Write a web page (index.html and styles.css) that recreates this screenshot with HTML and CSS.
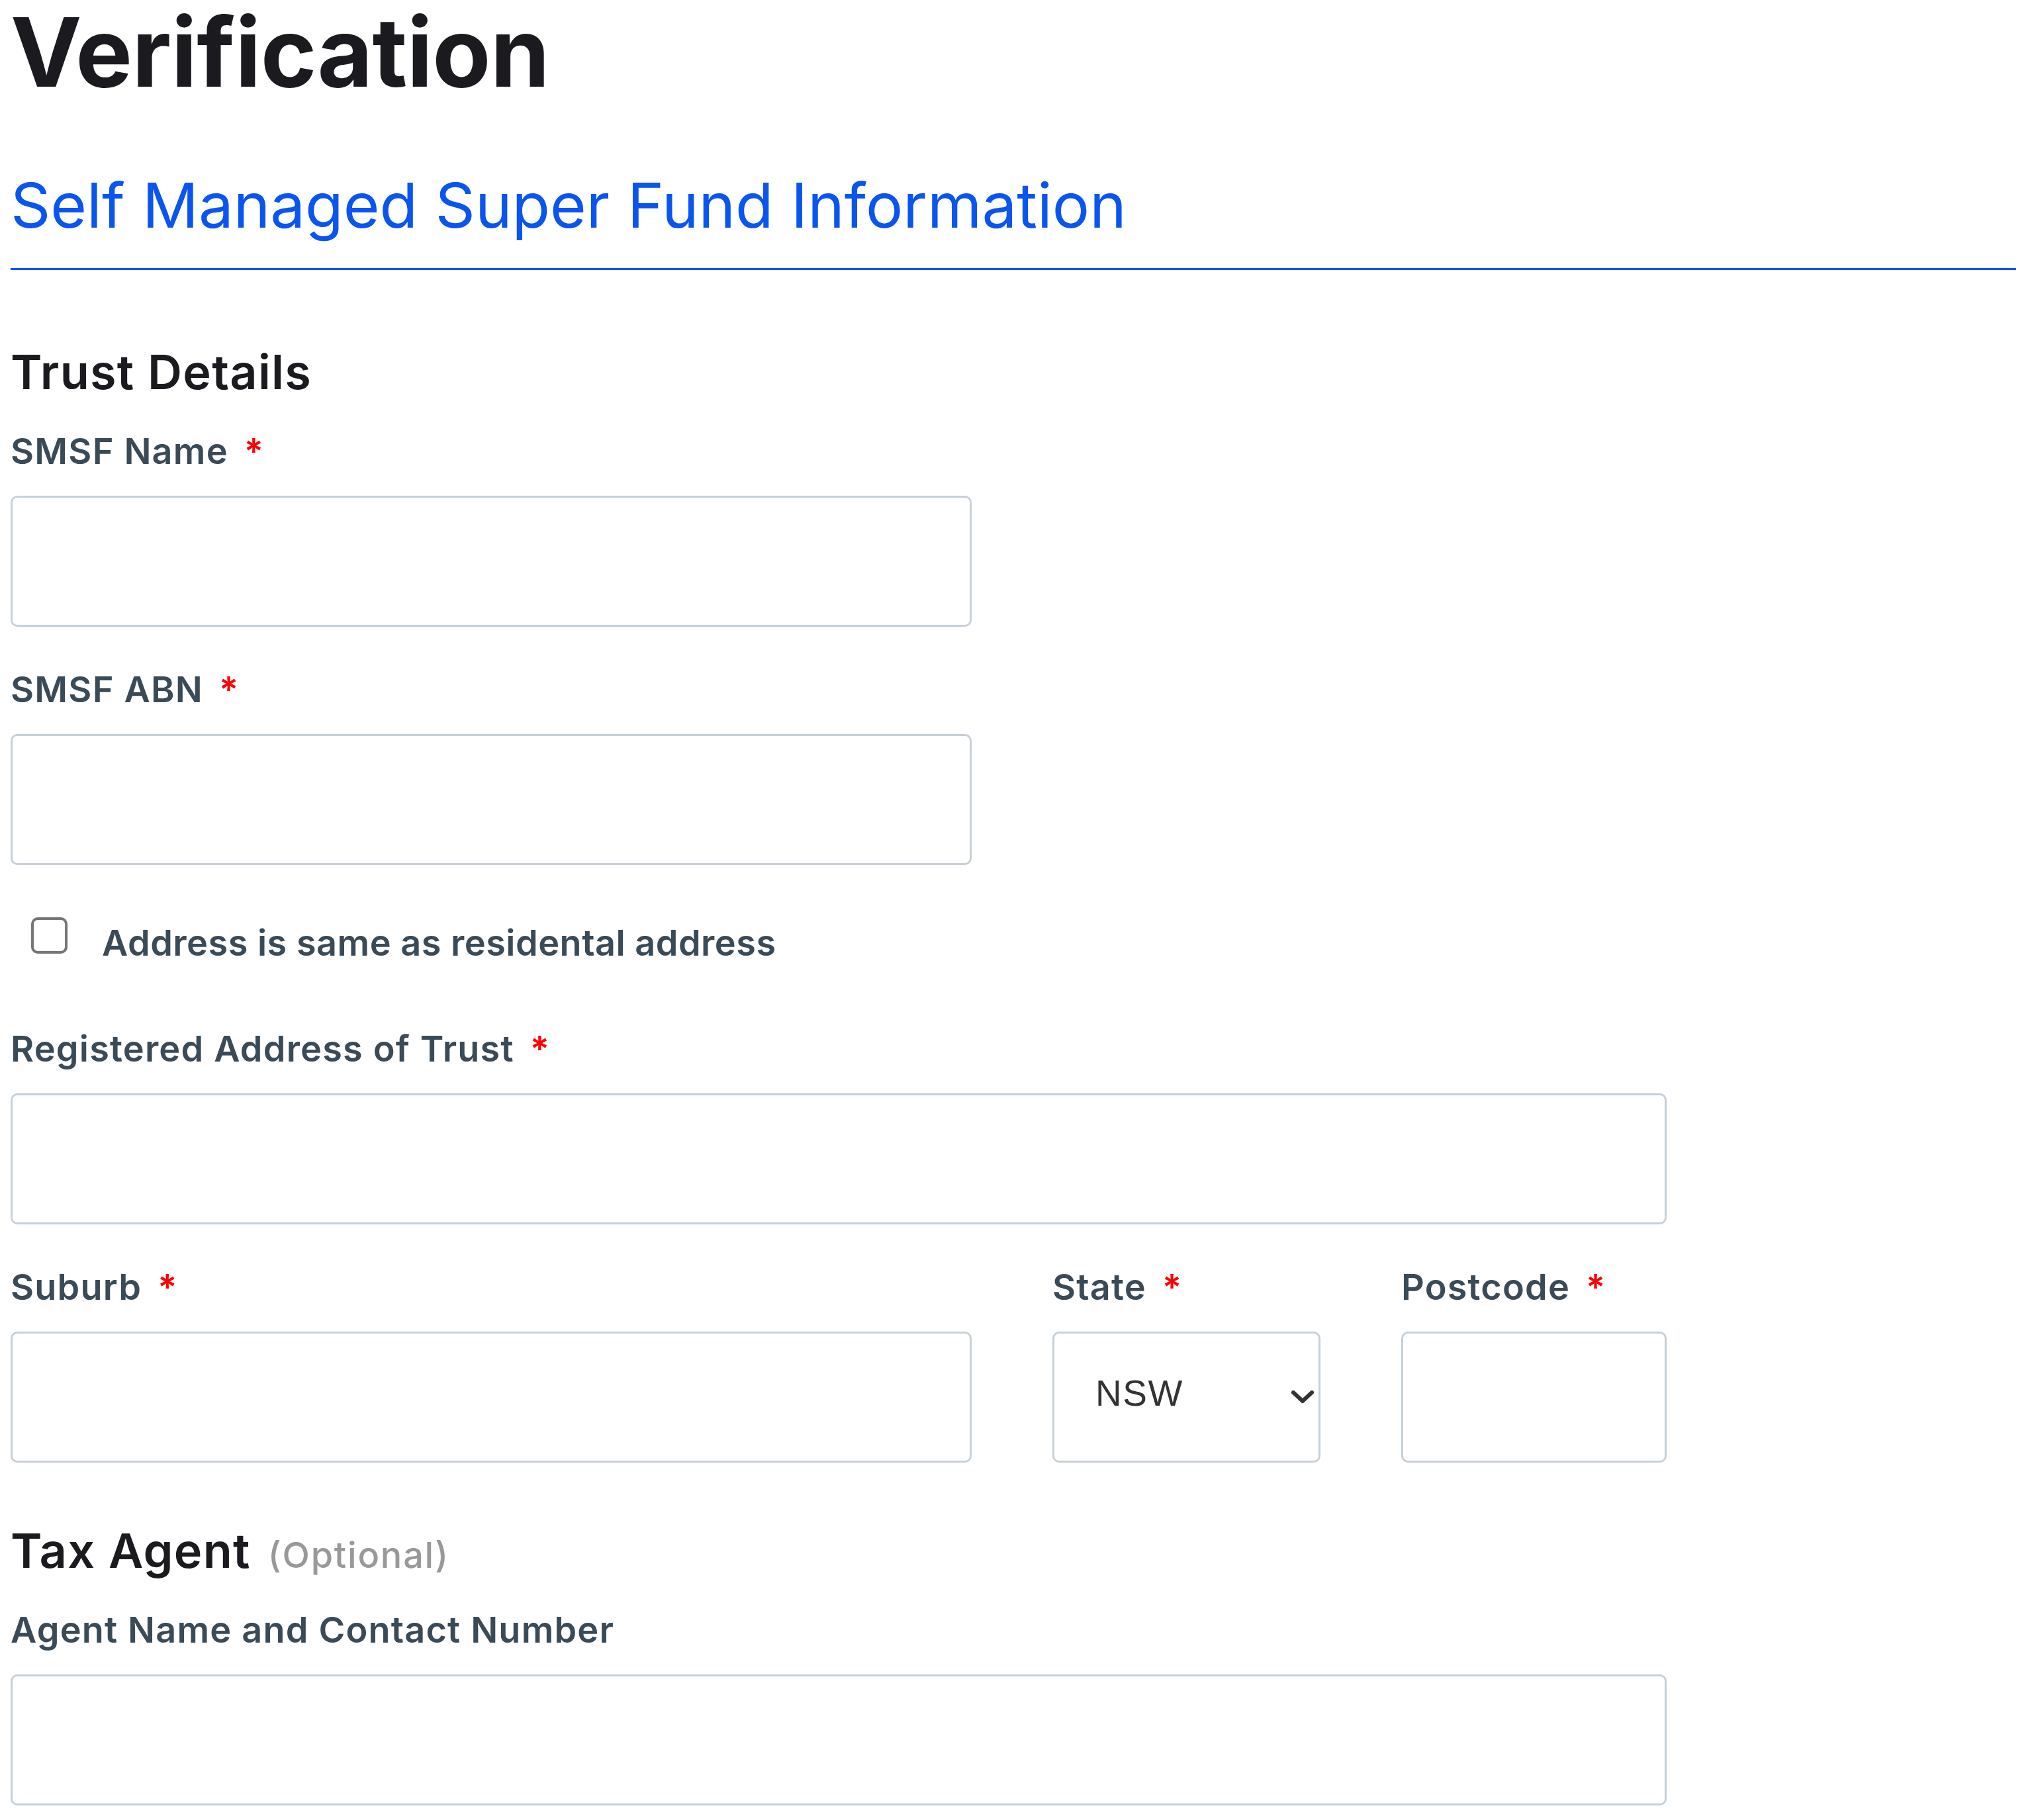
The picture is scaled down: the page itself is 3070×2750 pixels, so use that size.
FILE: index.html
```html
<!DOCTYPE html>
<html lang="en">
<head>
<meta charset="utf-8">
<title>Verification</title>
<link rel="stylesheet" href="styles.css">
</head>
<body>
<main class="page">
  <h1 class="page-title">Verification</h1>
  <h2 class="section-title">Self Managed Super Fund Information</h2>
  <form class="form">
    <h3 class="group-title">Trust Details</h3>

    <div class="field">
      <label class="label" for="smsf-name">SMSF Name<span class="req">*</span></label>
      <input class="input input-half" id="smsf-name" type="text">
    </div>

    <div class="field">
      <label class="label" for="smsf-abn">SMSF ABN<span class="req">*</span></label>
      <input class="input input-half" id="smsf-abn" type="text">
    </div>

    <div class="check-row">
      <input class="checkbox" id="same-address" type="checkbox">
      <label class="check-label" for="same-address">Address is same as residental address</label>
    </div>

    <div class="field">
      <label class="label" for="reg-address">Registered Address of Trust<span class="req">*</span></label>
      <input class="input" id="reg-address" type="text">
    </div>

    <div class="address-row">
      <div class="cell">
        <label class="label" for="suburb">Suburb<span class="req">*</span></label>
        <input class="input" id="suburb" type="text">
      </div>
      <div class="cell">
        <label class="label" for="state">State<span class="req">*</span></label>
        <div class="select-wrap">
          <select class="select" id="state">
            <option>NSW</option>
            <option>VIC</option>
            <option>QLD</option>
            <option>WA</option>
            <option>SA</option>
            <option>TAS</option>
            <option>ACT</option>
            <option>NT</option>
          </select>
          <svg class="chevron" viewBox="0 0 34 20" aria-hidden="true">
            <path d="M3 3 L17 16 L31 3" fill="none" stroke="#333" stroke-width="6" stroke-linecap="round" stroke-linejoin="round"/>
          </svg>
        </div>
      </div>
      <div class="cell">
        <label class="label" for="postcode">Postcode<span class="req">*</span></label>
        <input class="input" id="postcode" type="text">
      </div>
    </div>

    <h3 class="group-title group-title-agent">Tax Agent<span class="optional">(Optional)</span></h3>

    <div class="field">
      <label class="label" for="agent">Agent Name and Contact Number</label>
      <input class="input" id="agent" type="text">
    </div>
  </form>
</main>
</body>
</html>
```

FILE: styles.css
```css
html, body {
  margin: 0;
  padding: 0;
  background: #ffffff;
}

body {
  font-family: Inter, "Noto Sans", "Liberation Sans", sans-serif;
}

.page {
  padding: 10px 24px 0 16px;
}

.page-title {
  margin: 0;
  font-size: 144px;
  line-height: 138px;
  font-weight: 700;
  color: #1b1b1f;
  letter-spacing: -0.5px;
}

.section-title {
  margin: 115px 0 0;
  padding: 0 0 48px;
  font-size: 94px;
  line-height: 94px;
  font-weight: 400;
  color: #0a55f0;
  border-bottom: 3px solid #0a55f0;
}

.form {
  width: 2502px;
  padding-top: 118px;
}

.group-title {
  margin: 0 0 57px;
  font-size: 72px;
  line-height: 72px;
  font-weight: 600;
  color: #1b1b1f;
  letter-spacing: 1.3px;
}

.group-title-agent {
  margin-top: 97px;
  margin-bottom: 50px;
}

.optional {
  margin-left: 26px;
  font-size: 54px;
  font-weight: 500;
  color: #999999;
  letter-spacing: 1.8px;
}

.field {
  margin-bottom: 68px;
}

.label {
  display: block;
  margin-bottom: 40px;
  font-size: 54px;
  line-height: 54px;
  font-weight: 600;
  color: #3a4a57;
  letter-spacing: 1.2px;
}

.req {
  margin-left: 24px;
  color: #ff0000;
}

.input {
  display: block;
  box-sizing: border-box;
  width: 100%;
  height: 198px;
  margin: 0;
  padding: 0 40px;
  border: 3px solid #c6d0da;
  border-radius: 10px;
  background: #ffffff;
  font-family: "Liberation Sans", Arial, sans-serif;
  font-size: 53px;
  color: #333333;
  outline: none;
}

.input-half {
  width: 1452px;
}

.check-row {
  display: flex;
  align-items: flex-start;
  gap: 52px;
  margin: 79px 0 106px;
  padding-left: 31px;
}

.checkbox {
  appearance: none;
  -webkit-appearance: none;
  box-sizing: border-box;
  flex: none;
  width: 55px;
  height: 55px;
  margin: 0;
  border: 4px solid #767676;
  border-radius: 10px;
  background: #ffffff;
}

.check-label {
  margin-top: 12px;
  font-size: 54px;
  line-height: 54px;
  font-weight: 600;
  color: #3a4a57;
  letter-spacing: 0.5px;
}

.address-row {
  display: grid;
  grid-template-columns: 1452px 405px 401px;
  column-gap: 122px;
}

.select-wrap {
  position: relative;
}

.select {
  appearance: none;
  -webkit-appearance: none;
  display: block;
  box-sizing: border-box;
  width: 100%;
  height: 198px;
  margin: 0;
  padding: 0 0 12px 62px;
  border: 3px solid #c6d0da;
  border-radius: 10px;
  background: #ffffff;
  font-family: "Liberation Sans", Arial, sans-serif;
  font-size: 55px;
  letter-spacing: 1.5px;
  color: #333333;
  outline: none;
}

.chevron {
  position: absolute;
  right: 10px;
  top: 89px;
  width: 34px;
  height: 20px;
  pointer-events: none;
}
```
